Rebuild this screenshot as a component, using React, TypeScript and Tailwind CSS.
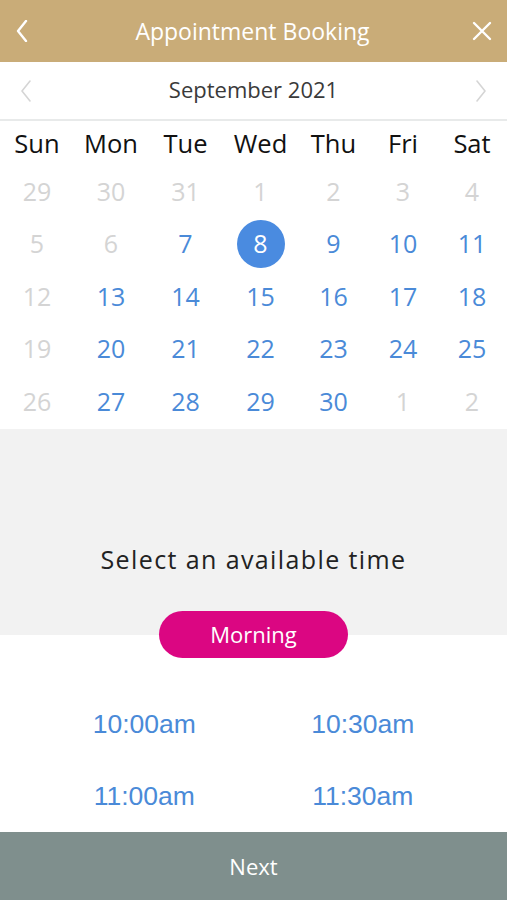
const weekdays = ['Sun', 'Mon', 'Tue', 'Wed', 'Thu', 'Fri', 'Sat'];

type Day = { n: number; muted?: boolean; selected?: boolean };

const weeks: Day[][] = [
  [{ n: 29, muted: true }, { n: 30, muted: true }, { n: 31, muted: true }, { n: 1, muted: true }, { n: 2, muted: true }, { n: 3, muted: true }, { n: 4, muted: true }],
  [{ n: 5, muted: true }, { n: 6, muted: true }, { n: 7 }, { n: 8, selected: true }, { n: 9 }, { n: 10 }, { n: 11 }],
  [{ n: 12, muted: true }, { n: 13 }, { n: 14 }, { n: 15 }, { n: 16 }, { n: 17 }, { n: 18 }],
  [{ n: 19, muted: true }, { n: 20 }, { n: 21 }, { n: 22 }, { n: 23 }, { n: 24 }, { n: 25 }],
  [{ n: 26, muted: true }, { n: 27 }, { n: 28 }, { n: 29 }, { n: 30 }, { n: 1, muted: true }, { n: 2, muted: true }],
];

const slots = ['10:00am', '10:30am', '11:00am', '11:30am'];

function Chevron({ dir, className }: { dir: 'left' | 'right'; className: string }): React.ReactElement {
  return (
    <svg viewBox="0 0 12 22" className={className} fill="none" stroke="currentColor" strokeWidth="1.6" strokeLinecap="round" strokeLinejoin="round">
      {dir === 'left' ? <path d="M10 1 L2 11 L10 21" /> : <path d="M2 1 L10 11 L2 21" />}
    </svg>
  );
}

export default function App(): React.ReactElement {
  return (
    <div className="flex h-[900px] w-[507px] flex-col bg-white font-['Open_Sans',sans-serif]">
      <header className="flex h-[62px] items-center justify-between bg-[#c9ac78] px-[15px] text-white">
        <Chevron dir="left" className="h-[22px] w-[14px] [stroke-width:2.4]" />
        <h1 className="pl-[4px] text-[23px] font-normal">Appointment Booking</h1>
        <svg viewBox="0 0 20 20" className="h-[20px] w-[20px]" stroke="currentColor" strokeWidth="2.4" strokeLinecap="round">
          <path d="M2 2 L18 18 M18 2 L2 18" />
        </svg>
      </header>

      <div className="flex h-[59px] items-center justify-between border-b-2 border-[#e8eaea] px-[20px] text-[#d5d5d5]">
        <Chevron dir="left" className="h-[22px] w-[12px]" />
        <span className="pb-[2px] text-[22px] text-[#3a3a3a]">September 2021</span>
        <Chevron dir="right" className="h-[22px] w-[12px]" />
      </div>

      <div className="grid grid-cols-[74px_74px_75px_75px_71px_68px_70px]">
        {weekdays.map((d) => (
          <div key={d} className="flex h-[44px] items-center justify-center pt-[1px] text-[25.5px] text-[#111]">
            {d}
          </div>
        ))}
        {weeks.flat().map((day, i) => (
          <div key={i} className="flex h-[52.5px] items-center justify-center text-[25px]">
            {day.selected ? (
              <span className="flex h-[48px] w-[48px] items-center justify-center rounded-full bg-[#4a8be0] text-white">
                {day.n}
              </span>
            ) : (
              <span className={day.muted ? 'text-[#d4d4d4]' : 'text-[#4a8ad8]'}>{day.n}</span>
            )}
          </div>
        ))}
      </div>

      <div className="mt-[1px] flex h-[206px] flex-col items-center bg-[#f2f2f2]">
        <p className="mt-[112px] text-[25px] tracking-[1.4px] text-[#222]">Select an available time</p>
      </div>

      <div className="flex flex-1 flex-col items-center">
        <button
          type="button"
          className="-mt-[24px] h-[47px] w-[189px] rounded-full bg-[#db0682] text-[22px] text-white"
        >
          Morning
        </button>
        <div className="mt-[52px] grid w-full grid-cols-2 gap-y-[44px] px-[35px] font-['Liberation_Sans',Arial,sans-serif]">
          {slots.map((s) => (
            <div key={s} className="text-center text-[26.5px] leading-[28px] text-[#4a8ad8]">
              {s}
            </div>
          ))}
        </div>
      </div>

      <button type="button" className="h-[68px] w-full bg-[#7f8f8d] text-[22px] text-white">
        Next
      </button>
    </div>
  );
}
